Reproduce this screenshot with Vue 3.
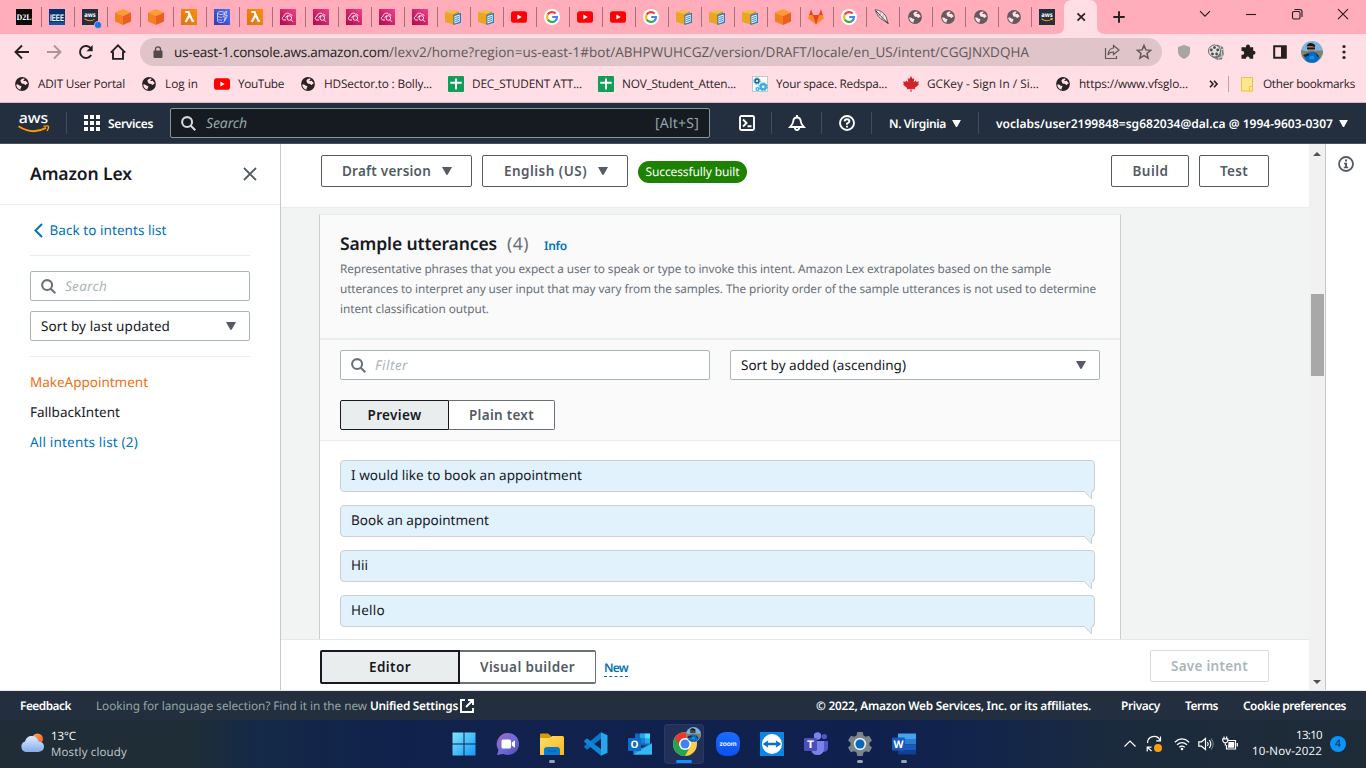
<script setup>
// Tracks a label so that it fills the given width in pixels.
const vFit = {
  mounted(el, { value }) {
    el.style.letterSpacing = '0px'
    const natural = el.getBoundingClientRect().width
    const count = el.textContent.trim().length
    el.style.letterSpacing = `${(value - natural) / count}px`
    el.style.width = `${value}px`
  },
}

const tabs = [
  'd2l', 'ieee', 'awsdot', 'cube', 'cube', 'lambda', 'dynamo', 'lambda',
  'lex', 'lex', 'lex', 'lex', 'lex', 'box', 'box', 'youtube', 'google',
  'youtube', 'youtube', 'google', 'box', 'box', 'box', 'cube', 'gitlab',
  'google', 'feather', 'globe', 'globe', 'globe', 'globe', 'awstile',
]

// Lettering that sits on top of a logo, in the logo's own units.
const lettering = {
  d2l: { text: 'D2L', x: 8, y: 11, size: 8.5, w: 15, font: 'Liberation Serif' },
  ieee: { text: 'IEEE', x: 8, y: 11.5, size: 9.5, w: 14, font: 'Liberation Sans' },
  awstile: { text: 'aws', x: 8, y: 8.3, size: 6.5, w: 11.5, font: 'Noto Sans' },
  awsdot: { text: 'aws', x: 8, y: 8.3, size: 6.5, w: 11.5, font: 'Noto Sans' },
  zoom: { text: 'zoom', x: 12, y: 14, size: 6.8, w: 17, font: 'Lato' },
  outlook: { text: 'O', x: 6.5, y: 16.2, size: 10.5, w: 8, font: 'Open Sans' },
  teams: { text: 'T', x: 6.5, y: 16.3, size: 10.5, w: 7, font: 'Open Sans' },
  word: { text: 'W', x: 6.5, y: 15.8, size: 10.5, w: 10, font: 'Open Sans' },
}

const bookmarks = [
  { icon: 'globe', text: 'ADIT User Portal', w: 87 },
  { icon: 'globe', text: 'Log in', w: 33 },
  { icon: 'youtube', text: 'YouTube', w: 46 },
  { icon: 'globe', text: 'HDSector.to : Bolly...', w: 108 },
  { icon: 'sheet', text: 'DEC_STUDENT ATT...', w: 110 },
  { icon: 'sheet', text: 'NOV_Student_Atten...', w: 114 },
  { icon: 'gears', text: 'Your space. Redspa...', w: 111 },
  { icon: 'maple', text: 'GCKey - Sign In / Si...', w: 112 },
  { icon: 'globe', text: 'https://www.vfsglo...', w: 109 },
]

const utterances = [
  { text: 'I would like to book an appointment', w: 231 },
  { text: 'Book an appointment', w: 138 },
  { text: 'Hii', w: 17 },
  { text: 'Hello', w: 34 },
]

const apps = [
  { icon: 'windows' },
  { icon: 'chat' },
  { icon: 'explorer', open: true },
  { icon: 'vscode' },
  { icon: 'outlook' },
  { icon: 'chrome', active: true },
  { icon: 'zoom' },
  { icon: 'viewer' },
  { icon: 'teams' },
  { icon: 'settings', open: true },
  { icon: 'word', open: true },
]
</script>

<template>
  <div class="screen">
    <svg class="sprite" aria-hidden="true">
      <defs>
        <linearGradient id="gOrange" x1="0" y1="1" x2="1" y2="0"><stop offset="0" stop-color="#c8511b" /><stop offset="1" stop-color="#f90" /></linearGradient>
        <linearGradient id="gBlue" x1="0" y1="1" x2="1" y2="0"><stop offset="0" stop-color="#2e3bb8" /><stop offset="1" stop-color="#5273ee" /></linearGradient>
        <linearGradient id="gPink" x1="0" y1="1" x2="1" y2="0"><stop offset="0" stop-color="#b0084d" /><stop offset="1" stop-color="#f2408d" /></linearGradient>
        <linearGradient id="gWin" x1="0" y1="0" x2="1" y2="1"><stop offset="0" stop-color="#7ce8fc" /><stop offset="1" stop-color="#1597f5" /></linearGradient>
        <linearGradient id="gChat" x1="0" y1="0" x2="1" y2="1"><stop offset="0" stop-color="#a56ab8" /><stop offset=".55" stop-color="#6d6ad8" /><stop offset="1" stop-color="#4b4bb4" /></linearGradient>
        <linearGradient id="gFolder" x1="0" y1="0" x2="1" y2="1"><stop offset="0" stop-color="#ffdf6b" /><stop offset="1" stop-color="#f9b619" /></linearGradient>
        <linearGradient id="gZoom" x1="0" y1="0" x2="0" y2="1"><stop offset="0" stop-color="#1a6dff" /><stop offset="1" stop-color="#0a50f5" /></linearGradient>
        <linearGradient id="gCloud" x1="0" y1="0" x2="0" y2="1"><stop offset="0" stop-color="#dcebff" /><stop offset="1" stop-color="#86acec" /></linearGradient>
        <linearGradient id="gSun" x1="0" y1="0" x2="1" y2="1"><stop offset="0" stop-color="#ffb04a" /><stop offset="1" stop-color="#ee5436" /></linearGradient>
      </defs>
      <symbol id="d2l" viewBox="0 0 16 16"><rect width="16" height="16" fill="#080808" /></symbol>
      <symbol id="ieee" viewBox="0 0 16 16"><rect width="16" height="16" fill="#07306e" /><rect y="13" width="16" height="3" fill="#0a57a6" /></symbol>
      <symbol id="awstile" viewBox="0 0 16 16"><rect width="16" height="16" fill="#232f3e" /><path d="M2.500 9.800q5 3.600 10 .6M11.500 9.600l1.800-.1-.4 1.700" fill="none" stroke="#f90" stroke-width="1.100" /></symbol>
      <symbol id="awsdot" viewBox="0 0 16 16" overflow="visible"><rect width="16" height="16" fill="#232f3e" /><path d="M2.500 9.800q5 3.600 10 .6" fill="none" stroke="#f90" stroke-width="1.100" /><circle cx="16" cy="16" r="3.600" fill="#1a73e8" stroke="#ffacbb" stroke-width=".8" /></symbol>
      <symbol id="cube" viewBox="0 0 16 16"><path d="M8 0l8 3.400L8 7 0 3.400z" fill="#fb9d33" /><path d="M0 3.400L8 7v9l-8-3.600z" fill="#f58020" /><path d="M16 3.400L8 7v9l8-3.600z" fill="#ea5f1f" /></symbol>
      <symbol id="lambda" viewBox="0 0 16 16"><rect width="16" height="16" fill="url(#gOrange)" /><rect width="16" height="16" fill="#f58a10" opacity=".55" /><path d="M4.300 3h3.200l4 9 1.500-.4M8.400 6.200L4.600 13" fill="none" stroke="#fff" stroke-width="2.200" /></symbol>
      <symbol id="dynamo" viewBox="0 0 16 16"><rect width="16" height="16" fill="url(#gBlue)" /><g fill="none" stroke="#d5dcff" stroke-width=".8"><ellipse cx="7" cy="4" rx="3.500" ry="1.500" /><path d="M3.500 4v8c0 2 7 2 7 0V9.500M10.500 4v2M3.500 7c1 1.400 4 1.600 5 .9M3.500 10c1 1.400 4 1.400 5 .7M11.500 2.500L9.500 8h2l-1 4 3-5.500h-2l1.500-4z" /></g></symbol>
      <symbol id="lex" viewBox="0 0 16 16"><rect width="16" height="16" fill="url(#gPink)" /><g fill="none" stroke="#fff" stroke-width=".9"><path d="M6 11H3.800C1.400 10.500 2.200 7.500 4 7.400 4.300 4 8.500 3.200 9.700 5.400 11 4.800 12 5.700 12 6.800" /><circle cx="9.300" cy="9" r="2.300" /><path d="M11 10.800l2 2M5.500 8.500L8 6.500" /></g></symbol>
      <symbol id="box" viewBox="0 0 16 16"><path d="M0 2.800L7 .5 14 2.500 8.500 5z" fill="#f0bc52" /><path d="M0 3l8.500 2v10.500L0 13z" fill="#eaa621" /><path d="M8 5.200l6-2.700v4l-3 8-3 1z" fill="#d98b1e" /><path d="M8.500 6L16 3.800v10L8.500 16z" fill="#2b7cba" /><path d="M9.500 7l5.200-1.600v7.400L9.500 14.400z" fill="#e6f3fa" /><path d="M10.200 8.500l3.800-1M10.200 10.500l3.800-1M10.200 12.500l3.800-1" stroke="#2b7cba" stroke-width=".9" /></symbol>
      <symbol id="youtube" viewBox="0 0 16 16"><rect y="2.300" width="16" height="11.400" rx="2.800" fill="#f00" /><path d="M6.400 5.600L10.700 8l-4.300 2.400z" fill="#fff" /></symbol>
      <symbol id="google" viewBox="0 0 16 16"><circle cx="8" cy="8" r="8" fill="#fff" /><g fill="none" stroke-width="2.200"><path d="M11.600 4.600A5 5 0 0 0 3.700 5.600" stroke="#ea4335" /><path d="M3.700 5.600a5 5 0 0 0 0 4.900" stroke="#fbbc05" /><path d="M3.700 10.500a5 5 0 0 0 7.600 1.300" stroke="#34a853" /><path d="M11.300 11.800A5 5 0 0 0 13 8H8.200" stroke="#4285f4" /></g></symbol>
      <symbol id="gitlab" viewBox="0 0 16 16"><path d="M8 15.500L.2 9.200 3 .8l2 5.200h6L13 .8l2.800 8.400z" fill="#fc6d26" /><path d="M8 15.500L5 6h6z" fill="#e24329" /><path d="M8 15.500l7.800-6.300-1.300-4L11 7zM8 15.500L.2 9.200l1.300-4L5 7z" fill="#fca326" opacity=".5" /><path d="M3 .8L5 6H1.300zM13 .8L11 6h3.700z" fill="#e24329" /></symbol>
      <symbol id="feather" viewBox="0 0 16 16"><path d="M1 .8c4.500 0 8.500 2.500 11 6.700L14 14l-4.300-2.500C5.500 9.500 3 6 1 .8z" fill="#f0ebea" stroke="#4a3c40" stroke-width=".8" /><path d="M2 2l12.500 13" stroke="#2c2426" stroke-width=".9" fill="none" /><path d="M6 2.500l.8 3.500M9 4.500l.5 4M4 6.500h3M7 9.500l3-.2" stroke="#9a9092" stroke-width=".6" fill="none" /></symbol>
      <symbol id="globe" viewBox="0 0 16 16"><circle cx="8" cy="8" r="6.900" fill="currentColor" /><path d="M2.200 8.500c2-.4 2.800.2 3.400 1.300 1.500-.2 2.300.6 1.500 1.700-.7.7-.4 1.500-.7 2.300C3.800 13 2.400 11 2.200 8.500zM7.400 3.300C8.500 2.500 9 2.500 10.500 2.700c.3 1.300-1 1-1.200 2 .7.5 1.900.6 2.200-.2l2.300 2.700c-.8.7-1.700.7-1.900 1.800-1 .2-1.300-.8-2.500-1.200-1.600 0-2.700-.6-2.300-1.800-.9-.3-1.200-1.400.3-2.700z" fill="#ffe0e6" /></symbol>
      <symbol id="sheet" viewBox="0 0 16 16"><rect width="16" height="16" rx="1" fill="#109d58" /><path d="M8 2.500v11M2.300 6.800h11.400" stroke="#fff" stroke-width="2" /></symbol>
      <symbol id="gears" viewBox="0 0 16 16"><rect x=".5" y=".5" width="15" height="15" fill="#f6fbfe" stroke="#b9cbd3" /><circle cx="5" cy="5" r="1.900" fill="none" stroke="#18709a" stroke-width="1.600" /><circle cx="5" cy="5" r="3.100" fill="none" stroke="#18709a" stroke-dasharray="1.300 1.150" /><circle cx="11.200" cy="10.800" r="2.600" fill="none" stroke="#37aee2" stroke-width="2.400" /><circle cx="11.200" cy="10.800" r="4.100" fill="none" stroke="#37aee2" stroke-dasharray="1.700 1.520" /><circle cx="5.500" cy="13" r="1.400" fill="none" stroke="#37aee2" stroke-width="1.300" /></symbol>
      <symbol id="maple" viewBox="0 0 16 16"><path d="M8 0l1.600 3 1.700-.8-.6 4 2-1.700.6 1.300L16 5.500l-.9 2.400.9.700-4.200 3.300.4 1.300-3.700-.5V16h-1v-3.300l-3.700.5.4-1.300L0 8.600l.9-.7L0 5.500l2.700.3.600-1.300 2 1.700-.6-4 1.700.8z" fill="#d3222a" /></symbol>

      <symbol id="windows" viewBox="0 0 24 24"><path d="M.5.500h11v11H.5zM12.500.5h11v11h-11zM.5 12.500h11v11H.5zM12.500 12.500h11v11h-11z" fill="url(#gWin)" /></symbol>
      <symbol id="chat" viewBox="0 0 24 24"><path d="M12 1a11 11 0 1 1-4.500 21L1 23l1.500-5A11 11 0 0 1 12 1z" fill="url(#gChat)" /><rect x="5.500" y="7.500" width="9.500" height="9" rx="1.500" fill="#fff" /><path d="M15.800 10.500l3.200-2.300v7.600l-3.200-2.300z" fill="#fff" /></symbol>
      <symbol id="explorer" viewBox="0 0 24 24"><path d="M0 2.500Q0 1.500 1 1.500h7l3 2.500v3H0z" fill="#dc9a02" /><path d="M0 6h10l2-2h10.500Q24 4 24 5.500V23H0z" fill="url(#gFolder)" /><path d="M4 23v-5q0-3 3-3h10q3 0 3 3v5z" fill="#0b79cf" /><path d="M8 19h8" stroke="#0a5ca0" stroke-width="1" /></symbol>
      <symbol id="vscode" viewBox="0 0 24 24"><path d="M17 .3l6.500 3v17.400l-6.500 3z" fill="#28a6f0" /><path d="M17 .3v6.500L3 17.800l-2.700-2.200v-1.500z" fill="#0b77c8" /><path d="M17 23.700v-6.500L3 6.200.3 8.400v1.500z" fill="#0e86d8" /></symbol>
      <symbol id="outlook" viewBox="0 0 24 24"><path d="M7 1.500h15v12H7z" fill="#1467bd" /><path d="M12 1.500h5v5h-5zM17 6.500h5v5h-5z" fill="#28a8ea" /><path d="M17 1.500h5v5h-5z" fill="#50d9ff" /><path d="M12 6.500h5v5h-5z" fill="#0f83d6" /><path d="M5.500 11.500L14 16l10-5v11.500H5.500z" fill="#1796e3" /><path d="M5.500 22.500l18.500-11v11z" fill="#35b9f1" /><rect y="6" width="13" height="13" rx="1" fill="#0a6cc5" /></symbol>
      <symbol id="chrome" viewBox="0 0 30 34"><g transform="translate(1 8)"><circle cx="12" cy="12" r="12" fill="#ffcd46" /><path d="M12 12L1.600 6A12 12 0 0 0 12 24l5-9z" fill="#23a455" /><path d="M1.600 6a12 12 0 0 1 20.800 0H12v6l-5 2z" fill="#e33b2e" /><circle cx="12" cy="12" r="6" fill="#fff" /><circle cx="12" cy="12" r="4.500" fill="#3f82f1" /></g><use href="#avatar" x="14" y="3" width="15" height="15" /></symbol>
      <symbol id="avatar" viewBox="0 0 22 22"><circle cx="11" cy="11" r="11" fill="#78b6dd" /><path d="M.2 9q5 2 8 1l13.500-.5.2 3-2 4-4.500 4.300q-6 1.500-10.500-.8Q-.5 16 .2 9z" fill="#8b8065" /><circle cx="10" cy="7" r="3.500" fill="#b77c5c" /><path d="M5.500 5.500Q7 1 11 2.200q3.500.5 3 4-4-2-9-.7z" fill="#171519" /><path d="M6 6.500h8v1.800H6z" fill="#17191f" /><path d="M5 12.500q5-3 11-.5l3 5-4.500 4.200q-5 1.500-9-1L3 15.500z" fill="#076bc4" /><path d="M2 14l5-1.500 2 1.500-5 2zM14 12l4 3-1 1.500z" fill="#182938" /><path d="M8.500 15q2 .5 4.500-.2v3.500H8.500z" fill="#1491eb" /></symbol>
      <symbol id="zoom" viewBox="0 0 24 24"><rect width="24" height="24" rx="9.500" fill="url(#gZoom)" /></symbol>
      <symbol id="viewer" viewBox="0 0 24 24"><rect width="24" height="24" fill="#0c86e4" /><circle cx="12" cy="12" r="10" fill="#fff" /><path d="M2.800 12l5.500-3.800-.6 2.600h8.600l-.6-2.600 5.500 3.800-5.500 3.800.6-2.600H7.700l.6 2.600z" fill="#0a6fc9" /></symbol>
      <symbol id="teams" viewBox="0 0 24 24"><circle cx="20.300" cy="4.600" r="2.700" fill="#5059c9" /><circle cx="13.500" cy="4" r="3.700" fill="#7b83eb" /><path d="M17 9h7v7q-.5 4-5 4z" fill="#5059c9" /><path d="M7 9h13v8q-.7 6-6.500 6T7 17z" fill="#7b83eb" /><rect y="6" width="13" height="13" rx="1.200" fill="#4a50ba" /></symbol>
      <symbol id="settings" viewBox="0 0 24 24"><path d="M9.300 0h5.400l.8 3.500 2.200 1.200 3.400-1L24 8.400l-2.600 2.400v2.400l2.600 2.400-2.900 4.700-3.400-1-2.200 1.200-.8 3.500H9.300l-.8-3.500-2.200-1.200-3.400 1L0 15.600l2.600-2.400v-2.400L0 8.400l2.900-4.700 3.400 1 2.200-1.200z" fill="#7b8589" /><circle cx="12" cy="12" r="6.200" fill="#e3ebef" /><circle cx="12" cy="12" r="4.500" fill="#0867b8" /></symbol>
      <symbol id="word" viewBox="0 0 24 24"><path d="M6 1.500h18V7H6z" fill="#41a5ee" /><path d="M6 7h18v5.500H6z" fill="#2b7cd3" /><path d="M6 12.500h18V18H6z" fill="#185abd" /><path d="M6 18h18v4.500H6z" fill="#123f93" /><rect y="5.500" width="13" height="13" rx="1" fill="#185abd" /></symbol>

      <symbol id="search" viewBox="0 0 16 16"><circle cx="6.500" cy="6.500" r="5.300" fill="none" stroke="currentColor" stroke-width="2.200" /><path d="M10.200 10.200l5 5" stroke="currentColor" stroke-width="2.200" /></symbol>
      <symbol id="caret" viewBox="0 0 10 8"><path d="M0 0h10L5.800 7.600q-.8.800-1.600 0z" fill="currentColor" /></symbol>
    </svg>

    <header class="browser">
      <div class="tabstrip">
        <div v-for="(name, i) in tabs" :key="i" class="tab">
          <svg class="favicon" viewBox="0 0 16 16">
            <use :href="'#' + name" width="16" height="16" />
            <text v-if="lettering[name]" :x="lettering[name].x" :y="lettering[name].y" :font-size="lettering[name].size" :font-family="lettering[name].font" :textLength="lettering[name].w" lengthAdjust="spacingAndGlyphs">{{ lettering[name].text }}</text>
          </svg>
        </div>
        <div class="tab-active">
          <svg viewBox="0 0 49 34"><path d="M0 34q8 0 8-8V8q0-8 8-8h17q8 0 8 8v18q0 8 8 8z" fill="#ffdfe5" /><path d="M21.500 13.300l7.400 7.400M28.900 13.300l-7.400 7.400" stroke="#2b2326" stroke-width="1.800" /></svg>
        </div>
        <svg class="plus" viewBox="0 0 12 12"><path d="M6 .3v11.400M.3 6h11.400" stroke="#241f21" stroke-width="1.900" /></svg>
        <div class="window-buttons">
          <svg viewBox="0 0 12 12"><path d="M1 3.200l5 5 5-5" /></svg>
          <svg viewBox="0 0 12 12"><path d="M1 6.500h10" /></svg>
          <svg viewBox="0 0 12 12"><rect x="1.500" y="3.500" width="7.500" height="7.500" rx="1.500" /><path d="M3.500 1.500h5.200q2.300 0 2.300 2.300V9" /></svg>
          <svg viewBox="0 0 12 12"><path d="M1 1.200l10 10M11 1.200l-10 10" /></svg>
        </div>
      </div>

      <div class="toolbar">
        <div class="nav-icons">
          <svg viewBox="0 0 16 16"><path d="M15 8H2M8 1.500L1.500 8 8 14.500" /></svg>
          <svg class="dim" viewBox="0 0 16 16"><path d="M1 8h13M8 1.500L14.500 8 8 14.500" /></svg>
          <svg viewBox="0 0 16 16"><path d="M13.200 11A6 6 0 1 1 13 4.600" /><path d="M14.700 1v6.200H8.500z" class="solid" /></svg>
          <svg viewBox="0 0 16 16"><path d="M.8 8.600L8 1.400l7.200 7.200M3 7.500v7.400h10V7.500" /></svg>
        </div>
        <div class="address">
          <svg class="lock" viewBox="0 0 10 13"><rect x=".5" y="4.500" width="9" height="7.500" rx="1" fill="#55494c" /><path d="M2.500 5V3.300a2.500 2.500 0 0 1 5 0V5" fill="none" stroke="#55494c" stroke-width="1.300" /></svg>
          <span v-fit="215" class="host">us-east-1.console.aws.amazon.com</span><span v-fit="640" class="path">/lexv2/home?region=us-east-1#bot/ABHPWUHCGZ/version/DRAFT/locale/en_US/intent/CGGJNXDQHA</span>
          <svg class="share" viewBox="0 0 16 16"><path d="M1.500 4v10.500h11V12M9.500 1.500L15 6l-5.500 4.500V8Q5.500 7.800 4 11 4.500 4.500 9.500 4z" /></svg>
          <svg class="star" viewBox="0 0 16 16"><path d="M8 1.500l1.900 4.400 4.700.4-3.600 3.100 1.100 4.700L8 11.600l-4.100 2.500L5 9.400 1.400 6.300l4.700-.4z" /></svg>
        </div>
        <div class="extensions">
          <svg viewBox="0 0 16 16"><path d="M8 1l6 2v4.500q0 5-6 7.500-6-2.500-6-7.500V3z" fill="#a9a3a4" /></svg>
          <svg viewBox="0 0 16 16"><path d="M9 .5l6 2.500.8 7-1.800 5.500-5 .3L4 13z" fill="#7d7d7d" /><path d="M12 2l2.500 12M10 14.500l4-2M12 6l3-.5" stroke="#ddd" stroke-width="1" /><circle cx="6.500" cy="7" r="6" fill="#e2e2e2" stroke="#5c5c5c" stroke-width=".9" /><g fill="#4b4b4b"><circle cx="6.500" cy="3.600" r="1.400" /><circle cx="3.300" cy="6" r="1.400" /><circle cx="9.700" cy="6" r="1.400" /><circle cx="4.500" cy="10" r="1.400" /><circle cx="8.600" cy="10" r="1.400" /></g></svg>
          <svg viewBox="0 0 16 16"><path d="M6 2.500a2 2 0 0 1 4 0v.8h3.200v3.500h.3a2 2 0 0 1 0 4h-.3v4H9.600v-.5a1.800 1.800 0 0 0-3.600 0v.5H1.500v-4h.8a1.900 1.900 0 0 0 0-3.800h-.8V3.300H6z" fill="#251f21" /></svg>
          <svg viewBox="0 0 16 16"><path d="M2.200 2.200h11.600v11.600H2.200z" fill="none" stroke="#251f21" stroke-width="2" /><path d="M9 2h5v12H9z" fill="#251f21" /></svg>
          <svg class="face"><use href="#avatar" /></svg>
          <svg class="dots" viewBox="0 0 4 16"><circle cx="2" cy="2.500" r="1.600" /><circle cx="2" cy="8" r="1.600" /><circle cx="2" cy="13.500" r="1.600" /></svg>
        </div>
      </div>

      <div class="bookmarks">
        <div v-for="b in bookmarks" :key="b.text" class="bookmark">
          <svg><use :href="'#' + b.icon" /></svg>
          <span v-fit="b.w">{{ b.text }}</span>
        </div>
        <svg class="more" viewBox="0 0 9 8"><path d="M1 .8L4 4 1 7.200M5 .8L8 4 5 7.200" /></svg>
        <i class="divider"></i>
        <svg class="folder" viewBox="0 0 12 15"><path d="M.5.500h11v13.500H.5z" fill="#fee591" stroke="#edc43f" /><path d="M8.500 9.500h3v4.500h-3z" fill="#ffeaa2" stroke="#edc43f" /></svg>
        <span v-fit="92">Other bookmarks</span>
      </div>
    </header>

    <nav class="aws-nav">
      <svg class="aws-logo" viewBox="0 0 32 20"><text x="15.500" y="10.300" font-family="Noto Sans" font-weight="500" font-size="14.500" textLength="29.500" lengthAdjust="spacingAndGlyphs">aws</text><path d="M.5 13.300q14 9 27.500 1.500" fill="none" stroke="#f90" stroke-width="1.900" /><path d="M25.500 13.400q4.500-1.200 5 0t-1.500 4.600" fill="none" stroke="#f90" stroke-width="1.400" /></svg>
      <i class="rule first"></i>
      <svg class="grid" viewBox="0 0 16 16"><path d="M0 0h4v4H0zM6 0h4v4H6zM12 0h4v4h-4zM0 6h4v4H0zM6 6h4v4H6zM12 6h4v4h-4zM0 12h4v4H0zM6 12h4v4H6zM12 12h4v4h-4z" fill="#fff" /></svg>
      <b v-fit="45" class="services">Services</b>
      <div class="aws-search">
        <svg><use href="#search" /></svg>
        <em v-fit="41">Search</em>
        <span v-fit="44">[Alt+S]</span>
      </div>
      <div class="aws-tools">
        <svg viewBox="0 0 16 16"><rect x="1" y="1" width="14" height="14" rx="1.500" /><path d="M4 4.500L7.500 8 4 11.500M8.500 11.300h4" /></svg>
        <i class="rule"></i>
        <svg viewBox="0 0 16 16"><path d="M1.200 12h13.600Q12 9 11.800 6.500 11.500 2.500 8 2.500T4.200 6.500Q4 9 1.200 12zM8 0v2.500M5.800 12.500Q6 15 8 15t2.200-2.500" /></svg>
        <i class="rule"></i>
        <svg viewBox="0 0 16 16"><circle cx="8" cy="8" r="7" /><path d="M5.600 6.400Q5.700 4.200 8 4.200t2.400 2Q10.400 7.500 8 8.600v1.200M8 10.800v1.800" /></svg>
        <i class="rule"></i>
      </div>
      <b v-fit="57">N. Virginia</b>
      <svg class="caret"><use href="#caret" /></svg>
      <i class="rule account"></i>
      <b v-fit="337">voclabs/user2199848=sg682034@dal.ca @ 1994-9603-0307</b>
      <svg class="caret"><use href="#caret" /></svg>
    </nav>

    <div class="workspace">
      <aside class="sidebar">
        <div class="side-head">
          <b v-fit="102">Amazon Lex</b>
          <svg viewBox="0 0 14 14"><path d="M1 1l12 12M13 1L1 13" stroke="#545b64" stroke-width="1.800" /></svg>
        </div>
        <div class="side-body">
          <a class="back"><svg viewBox="0 0 9 15"><path d="M8 1L1.500 7.500 8 14" fill="none" stroke="#0073bb" stroke-width="2" /></svg><span v-fit="117">Back to intents list</span></a>
          <div class="field"><svg><use href="#search" /></svg><em v-fit="42">Search</em></div>
          <div class="field select"><span v-fit="129">Sort by last updated</span><svg class="caret"><use href="#caret" /></svg></div>
          <ul>
            <li class="current"><span v-fit="118">MakeAppointment</span></li>
            <li><span v-fit="90">FallbackIntent</span></li>
            <li class="link"><span v-fit="108">All intents list (2)</span></li>
          </ul>
        </div>
      </aside>

      <main>
        <div class="main-bar">
          <button class="btn draft"><span v-fit="89">Draft version</span><svg class="caret"><use href="#caret" /></svg></button>
          <button class="btn lang"><span v-fit="83">English (US)</span><svg class="caret"><use href="#caret" /></svg></button>
          <div class="badge"><span v-fit="94">Successfully built</span></div>
          <button class="btn build"><span v-fit="36">Build</span></button>
          <button class="btn test"><span v-fit="28">Test</span></button>
        </div>

        <div class="canvas">
          <section class="card">
            <div class="card-head">
              <h2><span v-fit="157">Sample utterances</span><span v-fit="22" class="count">(4)</span><a v-fit="23">Info</a></h2>
              <p>
                <span v-fit="711">Representative phrases that you expect a user to speak or type to invoke this intent. Amazon Lex extrapolates based on the sample</span>
                <span v-fit="756">utterances to interpret any user input that may vary from the samples. The priority order of the sample utterances is not used to determine</span>
                <span v-fit="149">intent classification output.</span>
              </p>
            </div>
            <div class="card-tools">
              <div class="filters">
                <div class="field"><svg><use href="#search" /></svg><em v-fit="33">Filter</em></div>
                <div class="field select"><span v-fit="165">Sort by added (ascending)</span><svg class="caret"><use href="#caret" /></svg></div>
              </div>
              <div class="segments">
                <button class="on"><span v-fit="54">Preview</span></button>
                <button><span v-fit="65">Plain text</span></button>
              </div>
            </div>
            <div class="bubbles">
              <div v-for="u in utterances" :key="u.text" class="bubble">
                <span v-fit="u.w">{{ u.text }}</span>
                <svg viewBox="0 0 11 9"><path d="M0 0H11L7.500 1V8L.5 1z" fill="#e1f2fd" /><path d="M.3.500L7.500 7.800V1.500Q9.500.500 10.300-2" fill="none" stroke="#ccd0d2" /></svg>
              </div>
            </div>
          </section>
        </div>

        <div class="main-foot">
          <div class="segments big">
            <button class="on"><span v-fit="42">Editor</span></button>
            <button><span v-fit="95">Visual builder</span></button>
          </div>
          <a><span v-fit="24">New</span></a>
          <button class="btn save"><span v-fit="77">Save intent</span></button>
        </div>
      </main>

      <div class="scrollbar">
        <svg viewBox="0 0 8 4"><path d="M4 0l4 4H0z" fill="#505050" /></svg>
        <i></i>
        <svg class="down" viewBox="0 0 8 4"><path d="M4 4l4-4H0z" fill="#505050" /></svg>
      </div>
      <div class="help-rail">
        <svg viewBox="0 0 16 16"><circle cx="8" cy="8" r="7" fill="none" stroke="#545b64" stroke-width="1.800" /><path d="M7 3.600h2v2H7zM6 6.800h3v4h1.200v1.500H5.800v-1.500H7V8.200H6z" fill="#545b64" /></svg>
      </div>
    </div>

    <footer class="aws-foot">
      <b v-fit="51">Feedback</b>
      <span v-fit="271" class="hint">Looking for language selection? Find it in the new</span>
      <b v-fit="88">Unified Settings</b>
      <svg viewBox="0 0 14 14"><path d="M5 1H1v12h12V9M8 1h5v5M13 1L6 8" fill="none" stroke="#fff" stroke-width="1.900" /></svg>
      <b v-fit="275" class="copy">© 2022, Amazon Web Services, Inc. or its affiliates.</b>
      <b v-fit="39" class="f1">Privacy</b>
      <b v-fit="33" class="f2">Terms</b>
      <b v-fit="103" class="f2">Cookie preferences</b>
    </footer>

    <div class="taskbar">
      <div class="weather">
        <svg viewBox="0 0 24 20"><circle cx="17.500" cy="6" r="5.500" fill="url(#gSun)" /><path d="M5.500 19a5.500 5.500 0 0 1-.5-10.500Q6.500 3 11.500 3q5.500 0 7 5.500Q24 9 24 13.500T18.500 19z" fill="url(#gCloud)" /></svg>
        <div><span v-fit="25">13°C</span><span v-fit="76" class="soft">Mostly cloudy</span></div>
      </div>
      <div class="apps">
        <div v-for="app in apps" :key="app.icon" class="app" :class="{ active: app.active, open: app.open }">
          <svg v-if="app.active" class="chromeicon" viewBox="0 0 30 34"><use href="#chrome" width="30" height="34" /></svg>
          <svg v-else viewBox="0 0 24 24">
            <use :href="'#' + app.icon" width="24" height="24" />
            <text v-if="lettering[app.icon]" :x="lettering[app.icon].x" :y="lettering[app.icon].y" :font-size="lettering[app.icon].size" :font-family="lettering[app.icon].font" :textLength="lettering[app.icon].w" lengthAdjust="spacingAndGlyphs">{{ lettering[app.icon].text }}</text>
          </svg>
        </div>
      </div>
      <div class="tray">
        <svg viewBox="0 0 16 16"><path d="M2.500 10.500L8 5l5.500 5.500" /></svg>
        <svg viewBox="0 0 16 16"><path d="M1.500 7A6.500 6.500 0 0 1 14 4.500M14.500.500v4.300h-4.300M5.500 15L1.500 11.500M1.200 15.500v-4.300h4.300" /><circle cx="12" cy="12" r="4" fill="#ff9d0a" stroke="none" /></svg>
        <svg viewBox="0 0 16 16"><path d="M.8 6.200q7.200-6.500 14.400 0M3 8.800q5-4.500 10 0M5.300 11.300q2.700-2.400 5.400 0" /><circle cx="8" cy="13" r="1.300" fill="#fff" stroke="none" /></svg>
        <svg viewBox="0 0 16 16"><path d="M.8 5.800h2.700L7.500 2.500v11L3.500 10.200H.8zM9.500 6q1.500 2 0 4" /><path d="M11.300 4q3 4 0 8" /><path d="M13 2.500q4.500 5.500 0 11" opacity=".35" /></svg>
        <svg viewBox="0 0 16 16"><path d="M6 4.500h7.500V13h-9V9M15.300 7v3.500" /><path d="M6.500 6h5.700v5.700H6z" fill="#fff" stroke="none" /><path d="M.8 2.800h5v2q-.5 2-2.500 2t-2.500-2zM2 .5v2M4.600.500v2M3.300 7v2.500" /></svg>
        <div class="clock"><span v-fit="26">13:10</span><span v-fit="70">10-Nov-2022</span></div>
        <i>4</i>
      </div>
    </div>
  </div>
</template>

<style>
html,
body {
  margin: 0;
  overflow: hidden;
}
</style>

<style scoped>
* {
  box-sizing: border-box;
}
.screen {
  width: 1366px;
  height: 768px;
  display: flex;
  flex-direction: column;
  overflow: hidden;
  font-family: 'Noto Sans', 'Open Sans', sans-serif;
  font-size: 13.5px;
  color: #16191f;
  text-rendering: geometricPrecision;
}
.sprite {
  position: absolute;
  width: 0;
  height: 0;
}
svg {
  flex: none;
  display: block;
  overflow: visible;
}
svg text {
  fill: #fff;
  font-weight: 700;
  text-anchor: middle;
}
span,
b,
em,
.card a {
  display: inline-block;
  flex: none;
  white-space: nowrap;
}
b {
  font-weight: 600;
}
i {
  flex: none;
  display: block;
  font-style: normal;
}
button {
  font: inherit;
  margin: 0;
  padding: 0;
}

/* browser */
.browser {
  flex: none;
  height: 103px;
  background: #ffdfe5;
  border-bottom: 1px solid #d9b9c1;
  font-family: 'Open Sans', 'Noto Sans', sans-serif;
}
.tabstrip {
  height: 34px;
  background: #ffacbb;
  display: flex;
  padding-left: 9px;
}
.tab {
  flex: none;
  width: 33px;
  height: 20px;
  margin-top: 7px;
  border-right: 1px solid #a76f7b;
  display: flex;
  padding: 2px 0 0 7px;
  color: #65595c;
}
.tab:nth-child(32) {
  border-color: transparent;
}
.favicon {
  width: 16px;
  height: 16px;
}
.tab-active {
  width: 49px;
  margin-left: -9px;
}
.tab-active svg {
  width: 49px;
  height: 34px;
}
.plus {
  width: 12px;
  height: 12px;
  margin: 11px 0 0 8px;
}
.window-buttons {
  margin: 8px 17px 0 auto;
  display: flex;
  gap: 34px;
}
.window-buttons svg {
  width: 12px;
  height: 12px;
  fill: none;
  stroke: #231c1f;
  stroke-width: 1.1;
}
.toolbar {
  height: 36px;
  display: flex;
  align-items: center;
  padding: 0 0 0 14px;
}
.nav-icons {
  display: flex;
  gap: 16px;
  width: 126px;
}
.nav-icons svg {
  width: 16px;
  height: 16px;
  fill: none;
  stroke: #251f21;
  stroke-width: 1.9;
}
.nav-icons .dim {
  stroke: #ab9498;
}
.nav-icons .solid {
  fill: #251f21;
  stroke: none;
}
.address {
  width: 1022px;
  height: 28px;
  border-radius: 14px;
  background: #dfc4c9;
  display: flex;
  align-items: center;
  padding-left: 13px;
  font-size: 13.5px;
}
.lock {
  width: 10px;
  height: 13px;
  margin-right: 11px;
}
.host {
  color: #272022;
}
.path {
  color: #63575a;
}
.share,
.star {
  width: 16px;
  height: 16px;
  fill: none;
  stroke: #63575a;
  stroke-width: 1.2;
  margin-left: 75px;
}
.star {
  stroke-width: 1.5;
  margin-left: 16px;
}
.extensions {
  display: flex;
  align-items: center;
  margin-left: 14px;
}
.extensions svg {
  width: 16px;
  height: 16px;
  margin-right: 16px;
}
.extensions .face {
  width: 22px;
  height: 22px;
  margin: 0 19px 0 -3px;
}
.extensions .dots {
  width: 4px;
  margin: 0;
  fill: #251f21;
}
.bookmarks {
  height: 28px;
  display: flex;
  align-items: center;
  padding-left: 14px;
  font-size: 11.8px;
  color: #2a2225;
}
.bookmark {
  flex: none;
  display: flex;
  align-items: center;
  gap: 8px;
  margin-right: 16px;
}
.bookmark svg {
  width: 16px;
  height: 16px;
}
.more {
  width: 9px;
  height: 8px;
  margin-left: 5px;
  fill: none;
  stroke: #251f21;
  stroke-width: 1.6;
}
.divider {
  width: 1px;
  height: 16px;
  background: #c3a3aa;
  margin: 0 12px 0 10px;
}
.folder {
  width: 12px;
  height: 15px;
  margin-right: 10px;
}

/* console navigation */
.aws-nav {
  flex: none;
  height: 41px;
  background: #232f3e;
  border-bottom: 1px solid #48525f;
  display: flex;
  align-items: center;
  padding-left: 18px;
  color: #fff;
  font-size: 12px;
}
.aws-logo {
  width: 32px;
  height: 20px;
}
.aws-logo text {
  font-weight: 500;
}
.rule {
  width: 1px;
  height: 22px;
  background: #414d5c;
}
.rule.first {
  margin: 0 17px 0 16px;
}
.grid {
  width: 16px;
  height: 16px;
  margin-right: 8px;
}
.aws-search {
  width: 540px;
  height: 30px;
  margin-left: 17px;
  border: 1px solid #879596;
  border-radius: 2px;
  background: #161a21;
  display: flex;
  align-items: center;
  padding: 0 10px;
  font-size: 14px;
  color: #95a5a6;
}
.aws-search svg {
  width: 15px;
  height: 15px;
  margin-right: 10px;
  color: #d5dbdb;
}
.aws-search span {
  margin-left: auto;
}
.aws-tools {
  display: flex;
  align-items: center;
  justify-content: space-between;
  width: 133px;
  margin: 0 17px 0 29px;
}
.aws-tools svg {
  width: 16px;
  height: 16px;
  fill: none;
  stroke: #fff;
  stroke-width: 1.9;
}
.aws-nav .caret {
  width: 9px;
  height: 7px;
  margin-left: 6px;
}
.rule.account {
  margin: 0 17px;
}

/* workspace */
.workspace {
  flex: none;
  height: 547px;
  display: flex;
  border-bottom: 1px solid #e4e8e8;
}
.sidebar {
  flex: none;
  width: 281px;
  border-right: 1px solid #c2caca;
  background: #fff;
}
.side-head {
  height: 61px;
  border-bottom: 1px solid #eaeded;
  display: flex;
  align-items: center;
  justify-content: space-between;
  padding: 0 23px 0 30px;
  font-size: 17.5px;
}
.side-head svg {
  width: 14px;
  height: 14px;
}
.side-body {
  padding: 0 30px;
}
.back {
  height: 51px;
  border-bottom: 1px solid #eaeded;
  margin-bottom: 15px;
  display: flex;
  align-items: center;
  color: #0073bb;
}
.back svg {
  width: 9px;
  height: 15px;
  margin: 0 7px 0 3.5px;
}
.field {
  height: 30px;
  border: 1px solid #aab7b8;
  border-radius: 2px;
  background: #fff;
  display: flex;
  align-items: center;
  padding: 0 10px;
}
.field svg {
  width: 15px;
  height: 15px;
  margin-right: 9px;
  color: #687078;
}
.field em {
  color: #aab7b8;
}
.select {
  justify-content: space-between;
}
.select svg.caret,
.btn .caret {
  width: 10px;
  height: 8px;
  margin-right: 3px;
  color: #545b64;
}
.side-body .select {
  margin: 10px 0 15px;
}
ul {
  list-style: none;
  margin: 0;
  padding: 10px 0 0;
  border-top: 1px solid #eaeded;
}
li {
  height: 30px;
  line-height: 30px;
}
.current {
  color: #ec7211;
}
.link {
  color: #0073bb;
}
main {
  flex: none;
  width: 1028px;
  display: flex;
  flex-direction: column;
}
.main-bar {
  flex: none;
  height: 64px;
  border-bottom: 1px solid #eaeded;
  background: #fff;
  display: flex;
  padding: 11px 0 0 40px;
}
.btn {
  height: 32px;
  border: 1px solid #545b64;
  border-radius: 2px;
  background: #fff;
  color: #545b64;
  font-weight: 600;
  display: flex;
  align-items: center;
  justify-content: center;
}
.btn .caret {
  margin: 0 0 0 11px;
}
.draft {
  width: 151px;
  padding-left: 1px;
}
.lang {
  width: 146px;
  margin: 0 10px;
  padding-left: 2px;
}
.badge {
  width: 109px;
  height: 22px;
  margin-top: 6px;
  border-radius: 11px;
  background: #1d8102;
  color: #fff;
  font-size: 12px;
  line-height: 22px;
  text-align: center;
}
.build {
  width: 78px;
  margin: 0 10px 0 auto;
  padding-left: 1px;
}
.test {
  width: 70px;
  margin-right: 40px;
}
.canvas {
  flex: none;
  height: 431px;
  background: #f2f3f3;
  padding: 6px 0 0 38px;
  overflow: hidden;
}
.card {
  width: 802px;
  height: 440px;
  border: 1px solid #c8cfd0;
  border-top-color: #eaeded;
  background: #fff;
}
.card-head {
  height: 125px;
  background: #fafafa;
  border-bottom: 2px solid #eaeded;
  padding: 16px 20px 0;
}
h2 {
  margin: 0;
  display: flex;
  align-items: baseline;
  height: 26px;
  line-height: 26px;
  font-size: 17.5px;
  font-weight: 600;
}
.count {
  color: #687078;
  font-weight: 400;
  margin: 0 15px 0 10px;
}
h2 a {
  color: #0073bb;
  font-size: 12px;
}
p {
  margin: 2px 0 0;
  display: flex;
  flex-direction: column;
  align-items: flex-start;
  font-size: 11.8px;
  line-height: 20px;
  color: #687078;
}
.card-tools {
  height: 101px;
  background: #fafafa;
  border-bottom: 1px solid #eaeded;
  padding: 10px 20px 0;
}
.filters {
  display: flex;
  gap: 20px;
  margin-bottom: 20px;
}
.filters .field {
  width: 370px;
}
.segments {
  display: flex;
}
.segments button {
  width: 106px;
  height: 30px;
  border: 1px solid #687078;
  border-left: 0;
  border-radius: 0 2px 2px 0;
  background: #fff;
  color: #545b64;
  font-weight: 600;
  display: flex;
  align-items: center;
  justify-content: center;
}
.segments .on {
  width: 109px;
  border: 1px solid #16191f;
  border-radius: 2px 0 0 2px;
  background: #eaeded;
  color: #16191f;
}
.segments.big button {
  width: 136px;
  height: 34px;
  border-width: 2px 1px 2px 0;
}
.segments.big .on {
  width: 140px;
  border-width: 2px;
}
.bubbles {
  padding: 19px 25px 0 20px;
  display: flex;
  flex-direction: column;
  gap: 13px;
}
.bubble {
  position: relative;
  height: 32px;
  width: 755px;
  border: 1px solid #ccd0d2;
  border-radius: 4px;
  background: #e1f2fd;
  padding-left: 10px;
  line-height: 29px;
}
.bubble svg {
  position: absolute;
  right: -1px;
  bottom: -9px;
  width: 11px;
  height: 9px;
}
.main-foot {
  flex: none;
  height: 51px;
  border-top: 1px solid #e4e8e8;
  background: #fff;
  display: flex;
  padding: 10px 40px 0 39px;
}
.main-foot a {
  margin: 8px 0 0 8px;
  height: 19px;
  line-height: 20px;
  border-bottom: 1px dashed #0073bb;
  color: #0073bb;
  font-size: 12px;
  font-weight: 600;
}
.save {
  width: 119px;
  margin-left: auto;
  border-color: #d5dbdb;
  color: #aab7b8;
}
.scrollbar {
  flex: none;
  width: 16px;
  background: #f1f1f1;
  display: flex;
  flex-direction: column;
  align-items: center;
  padding-top: 8px;
}
.scrollbar svg {
  width: 8px;
  height: 4px;
}
.scrollbar i {
  width: 13px;
  height: 82px;
  margin: 138px 0 0 1px;
  background: #a8a8a8;
}
.scrollbar .down {
  margin-top: auto;
  margin-bottom: 6px;
}
.help-rail {
  flex: 1;
  border-left: 1px solid #c2caca;
  background: #fff;
  padding: 12px 0 0 12px;
}
.help-rail svg {
  width: 16px;
  height: 16px;
}

/* console footer */
.aws-foot {
  flex: none;
  height: 29px;
  background: #232f3e;
  display: flex;
  align-items: center;
  padding-left: 20px;
  color: #fff;
  font-size: 11.8px;
}
.hint {
  margin: 0 3px 0 25px;
  color: #95a5a6;
}
.aws-foot svg {
  width: 14px;
  height: 14px;
  margin-left: 2px;
}
.copy {
  margin-left: 342px;
}
.f1 {
  margin-left: 30px;
}
.f2 {
  margin-left: 25px;
}

/* taskbar */
.taskbar {
  flex: none;
  height: 48px;
  background: linear-gradient(90deg, #202d36 0, #1f2d37 195px, #152947 250px, #10224c 400px, #10204e 880px, #13264a 1000px, #1b2a3c 1120px, #1e2b37 100%);
  display: flex;
  color: #fff;
  font-family: 'Open Sans', 'Noto Sans', sans-serif;
  font-size: 11.5px;
}
.weather {
  width: 444px;
  display: flex;
  padding: 9px 0 0 20px;
  line-height: 16px;
}
.weather svg {
  width: 24px;
  height: 20px;
  margin: 4px 7px 0 0;
}
.weather div,
.clock {
  display: flex;
  flex-direction: column;
  align-items: flex-start;
}
.soft {
  color: #c5cbd0;
}
.apps {
  display: flex;
}
.app {
  position: relative;
  width: 40px;
  height: 40px;
  margin: 4px 4px 0 0;
  border-radius: 4px;
  display: flex;
  justify-content: center;
  align-items: center;
}
.app svg {
  width: 24px;
  height: 24px;
}
.app .chromeicon {
  width: 30px;
  height: 34px;
  margin: -7px 0 0 5px;
}
.app.active {
  background: #212f59;
  box-shadow: inset 0 0 0 1px #2b3862;
}
.app.open::after,
.app.active::after {
  content: '';
  position: absolute;
  left: 17px;
  bottom: 1px;
  width: 6px;
  height: 3px;
  border-radius: 2px;
  background: #9aa3b5;
}
.app.active::after {
  left: 12px;
  width: 16px;
  background: #0f92ff;
}
.tray {
  margin-left: auto;
  padding: 0 20px 0 0;
  display: flex;
  align-items: center;
}
.tray svg {
  width: 16px;
  height: 16px;
  margin-right: 8px;
  fill: none;
  stroke: #fff;
  stroke-width: 1.2;
}
.tray svg:nth-child(2) {
  margin-right: 12px;
}
.clock {
  align-items: flex-end;
  margin: 0 8px 0 6px;
  line-height: 16px;
}
.tray i {
  width: 16px;
  height: 16px;
  border-radius: 50%;
  background: #0a93fb;
  color: #10203a;
  font-size: 10.5px;
  line-height: 16px;
  text-align: center;
}
</style>
